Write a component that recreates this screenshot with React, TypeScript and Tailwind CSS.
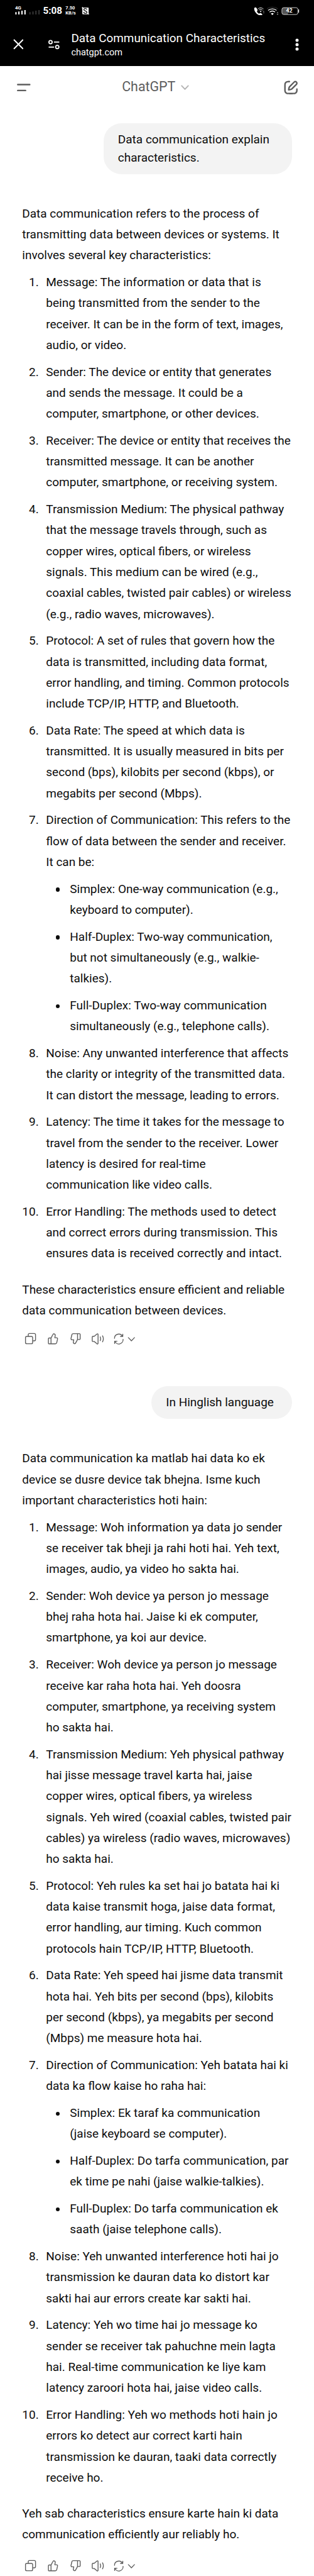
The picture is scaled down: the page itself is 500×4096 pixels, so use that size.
import React from "react";

type Item = { text: string[]; bullets?: string[][] };
type Answer = { intro: string[]; items: Item[]; outro: string[] };

const english: Answer = {
  intro: ["Data communication refers to the process of", "transmitting data between devices or systems. It", "involves several key characteristics:"],
  items: [
    { text: ["Message: The information or data that is", "being transmitted from the sender to the", "receiver. It can be in the form of text, images,", "audio, or video."] },
    { text: ["Sender: The device or entity that generates", "and sends the message. It could be a", "computer, smartphone, or other devices."] },
    { text: ["Receiver: The device or entity that receives the", "transmitted message. It can be another", "computer, smartphone, or receiving system."] },
    { text: ["Transmission Medium: The physical pathway", "that the message travels through, such as", "copper wires, optical fibers, or wireless", "signals. This medium can be wired (e.g.,", "coaxial cables, twisted pair cables) or wireless", "(e.g., radio waves, microwaves)."] },
    { text: ["Protocol: A set of rules that govern how the", "data is transmitted, including data format,", "error handling, and timing. Common protocols", "include TCP/IP, HTTP, and Bluetooth."] },
    { text: ["Data Rate: The speed at which data is", "transmitted. It is usually measured in bits per", "second (bps), kilobits per second (kbps), or", "megabits per second (Mbps)."] },
    {
      text: ["Direction of Communication: This refers to the", "flow of data between the sender and receiver.", "It can be:"],
      bullets: [
        ["Simplex: One-way communication (e.g.,", "keyboard to computer)."],
        ["Half-Duplex: Two-way communication,", "but not simultaneously (e.g., walkie-", "talkies)."],
        ["Full-Duplex: Two-way communication", "simultaneously (e.g., telephone calls)."],
      ],
    },
    { text: ["Noise: Any unwanted interference that affects", "the clarity or integrity of the transmitted data.", "It can distort the message, leading to errors."] },
    { text: ["Latency: The time it takes for the message to", "travel from the sender to the receiver. Lower", "latency is desired for real-time", "communication like video calls."] },
    { text: ["Error Handling: The methods used to detect", "and correct errors during transmission. This", "ensures data is received correctly and intact."] },
  ],
  outro: ["These characteristics ensure efficient and reliable", "data communication between devices."],
};

const hinglish: Answer = {
  intro: ["Data communication ka matlab hai data ko ek", "device se dusre device tak bhejna. Isme kuch", "important characteristics hoti hain:"],
  items: [
    { text: ["Message: Woh information ya data jo sender", "se receiver tak bheji ja rahi hoti hai. Yeh text,", "images, audio, ya video ho sakta hai."] },
    { text: ["Sender: Woh device ya person jo message", "bhej raha hota hai. Jaise ki ek computer,", "smartphone, ya koi aur device."] },
    { text: ["Receiver: Woh device ya person jo message", "receive kar raha hota hai. Yeh doosra", "computer, smartphone, ya receiving system", "ho sakta hai."] },
    { text: ["Transmission Medium: Yeh physical pathway", "hai jisse message travel karta hai, jaise", "copper wires, optical fibers, ya wireless", "signals. Yeh wired (coaxial cables, twisted pair", "cables) ya wireless (radio waves, microwaves)", "ho sakta hai."] },
    { text: ["Protocol: Yeh rules ka set hai jo batata hai ki", "data kaise transmit hoga, jaise data format,", "error handling, aur timing. Kuch common", "protocols hain TCP/IP, HTTP, Bluetooth."] },
    { text: ["Data Rate: Yeh speed hai jisme data transmit", "hota hai. Yeh bits per second (bps), kilobits", "per second (kbps), ya megabits per second", "(Mbps) me measure hota hai."] },
    {
      text: ["Direction of Communication: Yeh batata hai ki", "data ka flow kaise ho raha hai:"],
      bullets: [
        ["Simplex: Ek taraf ka communication", "(jaise keyboard se computer)."],
        ["Half-Duplex: Do tarfa communication, par", "ek time pe nahi (jaise walkie-talkies)."],
        ["Full-Duplex: Do tarfa communication ek", "saath (jaise telephone calls)."],
      ],
    },
    { text: ["Noise: Yeh unwanted interference hoti hai jo", "transmission ke dauran data ko distort kar", "sakti hai aur errors create kar sakti hai."] },
    { text: ["Latency: Yeh wo time hai jo message ko", "sender se receiver tak pahuchne mein lagta", "hai. Real-time communication ke liye kam", "latency zaroori hota hai, jaise video calls."] },
    { text: ["Error Handling: Yeh wo methods hoti hain jo", "errors ko detect aur correct karti hain", "transmission ke dauran, taaki data correctly", "receive ho."] },
  ],
  outro: ["Yeh sab characteristics ensure karte hain ki data", "communication efficiently aur reliably ho."],
};

function Lines({ lines }: { lines: string[] }) {
  return (
    <>
      {lines.map((line) => (
        <span key={line} className="block whitespace-nowrap">{line}</span>
      ))}
    </>
  );
}

function StatusBar() {
  return (
    <div className="flex h-[48px] items-start justify-between pl-[24px] pr-[23.3px]">
      <div className="flex items-start">
        <div className="mt-[9px] flex w-[39.5px] flex-col">
          <span className="h-[6.5px] text-[7.8px] font-bold leading-[7px]">4G</span>
          <svg width="39.5" height="7.5" viewBox="0 0 39.5 7.5">
            <path d="M1.4 3.2v4.1M6.1 2.2v5.1M11 1v6.3M15.8 0v7.3" stroke="#fff" strokeWidth="2.1" />
            <path d="M23.7 3.2v4.1M28.5 2.2v5.1M33.2 1v6.3M38.1 0v7.3" stroke="#333" strokeWidth="2.1" />
          </svg>
        </div>
        <span className="ml-[5px] mt-[9.4px] text-[15.3px] font-bold leading-[17px]">5:08</span>
        <span className="ml-[5.2px] mt-[9.2px] text-[7.5px] font-bold leading-[7.6px]">7.50<br />KB/s</span>
        <span className="ml-[9.3px] mt-[10.7px] flex">
          <svg width="12.6" height="12.6" viewBox="0 0 54 54">
            <path d="M7 0v48h47M0 7h46v47" fill="none" stroke="#fff" strokeWidth="4" />
            <rect x="7" y="7" width="39" height="41" fill="#fff" />
            <path d="M36 19c-1-6-6-8-11-8-6 0-10 3-10 8 0 11 21 6 21 17 0 5-4 8-10 8s-11-3-12-9" fill="none" stroke="#000" strokeWidth="5" />
          </svg>
        </span>
      </div>
      <div className="flex items-start">
        <svg className="mt-[9.5px]" width="72.3" height="14" viewBox="34 7.5 312.3 60.5" fill="none">
          <path d="M38 19c-3 12 4 27 16 39 11 10 25 15 37 12 3-4 2-8-2-12l-9-4c-4-1-7 4-10 4-6-3-12-9-14-16 2-3 5-5 4-9l-6-13c-5-6-11-6-16-1z" fill="#fff" />
          <path d="M62 26c11-10 28-10 39 0M69 34c7-6 18-6 25 0" stroke="#fff" strokeWidth="4" />
          <circle cx="82" cy="43" r="4.5" fill="#fff" />
          <path d="M99 42l4-3v18" stroke="#aaa" strokeWidth="3" />
          <path d="M126 24c20-15 52-15 73 0" stroke="#333" strokeWidth="5" />
          <path d="M133 36c17-14 42-14 58 0M143 47c12-9 26-9 38 0" stroke="#fff" strokeWidth="5.5" />
          <path d="M162 68l-10-10c6-6 14-6 20 0z" fill="#fff" />
          <path d="M192 53l6-7 6 7zM192 60l6 7 6-7z" fill="#ccc" />
          <path d="M270 17h-28a13 13 0 0 0-13 13v21a13 13 0 0 0 13 13h28z" fill="#555" />
          <rect x="228" y="17" width="110" height="47" rx="13" stroke="#ddd" strokeWidth="4" />
          <path d="M343 29v22" stroke="#ddd" strokeWidth="6" />
          <text x="256" y="52" fill="#fff" fontSize="39" fontWeight="700">42</text>
        </svg>
      </div>
    </div>
  );
}

function BrowserBar() {
  return (
    <div className="flex h-[56.6px] items-start pl-[20.5px] pr-[23.6px]">
      <svg className="mt-[14.2px]" width="16.8" height="16.8" viewBox="0 0 16.8 16.8">
        <path d="M1 1l14.8 14.8M15.8 1L1 15.8" stroke="#fff" strokeWidth="2" />
      </svg>
      <svg className="ml-[39.5px] mt-[14.5px]" width="18.2" height="16" viewBox="76.8 62.5 18.2 16" fill="none" stroke="#fff" strokeWidth="1.8">
        <circle cx="80.3" cy="66.4" r="2.6" />
        <path d="M85.6 66.4h8.6M77.3 74.3h8.6" />
        <circle cx="91" cy="74.3" r="2.6" />
      </svg>
      <div className="ml-[18.4px] grow whitespace-nowrap">
        <div className="mt-[1px] text-[18.9px] leading-[24px]">Data Communication Characteristics</div>
        <div className="mt-[1px] text-[14.5px] leading-[20px]">chatgpt.com</div>
      </div>
      <svg className="mt-[12.5px]" width="6" height="20" viewBox="0 0 6 20" fill="#fff">
        <circle cx="3" cy="2.9" r="2.5" />
        <circle cx="3" cy="10" r="2.5" />
        <circle cx="3" cy="17.1" r="2.5" />
      </svg>
    </div>
  );
}

function ChatNav() {
  return (
    <nav className="flex h-[91.9px] items-start justify-between pl-[27px] pr-[22.6px] text-[#5d5d5d]">
      <svg className="mt-[28.4px]" width="22" height="12.4" viewBox="0 0 22 12.4" stroke="currentColor" strokeWidth="2.5" strokeLinecap="round">
        <path d="M1.3 1.4h19M1.3 11h12.3" />
      </svg>
      <div className="mt-[20.6px] flex items-center gap-[9px] pr-[2.4px]">
        <span className="text-[21.4px] leading-[25px]">ChatGPT</span>
        <svg className="mt-[3px]" width="13" height="9" viewBox="0 0 13 9" fill="none" stroke="#b4b4b4" strokeWidth="1.9" strokeLinecap="round" strokeLinejoin="round">
          <path d="M1.3 1.4l5.2 5.5 5.2-5.5" />
        </svg>
      </div>
      <svg className="mt-[20.3px]" width="28.5" height="28.5" viewBox="0 0 24 24" fill="currentColor">
        <path d="M15.6729 3.91287C16.8918 2.69392 18.8682 2.69392 20.0871 3.91287C21.3061 5.13182 21.3061 7.10813 20.0871 8.32708L14.1499 14.2643C13.3849 15.0293 12.3925 15.5255 11.3215 15.6785L9.14142 15.9899C8.82983 16.0344 8.51546 15.9297 8.29289 15.7071C8.07033 15.4845 7.96554 15.1701 8.01005 14.8586L8.32149 12.6785C8.47449 11.6075 8.97072 10.615 9.7357 9.85006L15.6729 3.91287ZM18.6729 5.32708C18.235 4.88918 17.525 4.88918 17.0871 5.32708L11.1499 11.2643C10.6909 11.7233 10.3932 12.3187 10.3014 12.9613L10.1785 13.8215L11.0386 13.6986C11.6812 13.6068 12.2767 13.3091 12.7357 12.8501L18.6729 6.91287C19.1108 6.47497 19.1108 5.76499 18.6729 5.32708ZM11 3.99929C11.0004 4.55157 10.5531 4.99963 10.0008 5.00007C9.00227 5.00084 8.29769 5.00827 7.74651 5.06064C7.20685 5.11191 6.88488 5.20117 6.63803 5.32695C6.07354 5.61457 5.6146 6.07351 5.32698 6.63799C5.19279 6.90135 5.10062 7.24904 5.05118 7.8542C5.00078 8.47105 5 9.26336 5 10.4V13.6C5 14.7366 5.00078 15.5289 5.05118 16.1457C5.10062 16.7509 5.19279 17.0986 5.32698 17.3619C5.6146 17.9264 6.07354 18.3854 6.63803 18.673C6.90138 18.8072 7.24907 18.8993 7.85424 18.9488C8.47108 18.9992 9.26339 19 10.4 19H13.6C14.7366 19 15.5289 18.9992 16.1458 18.9488C16.7509 18.8993 17.0986 18.8072 17.362 18.673C17.9265 18.3854 18.3854 17.9264 18.673 17.3619C18.7988 17.1151 18.8881 16.7931 18.9393 16.2535C18.9917 15.7023 18.9991 14.9977 18.9999 13.9992C19.0003 13.4469 19.4484 12.9995 20.0007 13C20.553 13.0004 21.0003 13.4485 20.9999 14.0007C20.9991 14.9789 20.9932 15.7808 20.9304 16.4426C20.8664 17.116 20.7385 17.7136 20.455 18.2699C19.9757 19.2107 19.2108 19.9756 18.27 20.455C17.6777 20.7568 17.0375 20.8826 16.3086 20.9421C15.6008 21 14.7266 21 13.6428 21H10.3572C9.27339 21 8.39925 21 7.69138 20.9421C6.96253 20.8826 6.32234 20.7568 5.73005 20.455C4.78924 19.9756 4.02433 19.2107 3.54497 18.2699C3.24318 17.6776 3.11737 17.0374 3.05782 16.3086C2.99998 15.6007 2.99999 14.7266 3 13.6428V10.3572C2.99999 9.27337 2.99998 8.39922 3.05782 7.69134C3.11737 6.96249 3.24318 6.3223 3.54497 5.73001C4.02433 4.7892 4.78924 4.0243 5.73005 3.54493C6.28633 3.26149 6.88399 3.13358 7.55735 3.06961C8.21919 3.00673 9.02103 3.00083 9.99922 3.00007C10.5515 2.99964 10.9996 3.447 11 3.99929Z" />
      </svg>
    </nav>
  );
}

const thumb = "M183 82c0-3 2-5 5-5h13l13-24c3-6 5-6 8-5 6 2 9 6 8 12l-3 15h12c5 0 8 4 7 9l-6 26c-1 4-4 7-9 7h-43c-3 0-5-2-5-5zM201 77v40";

function Actions() {
  return (
    <div className="flex h-[20px] items-center pl-[39.3px] [&_svg]:h-[19.45px] [&_svg]:fill-none [&_svg]:stroke-[#5d5d5d] [&_svg]:stroke-[6px]">
      <svg width="19.45" viewBox="20 40 84 84">
        <rect x="27" y="66" width="49" height="50" rx="8" />
        <path d="M46 66V54a8 8 0 0 1 8-8h34a8 8 0 0 1 8 8v34a8 8 0 0 1-8 8H77" />
      </svg>
      <svg className="ml-[16.2px]" width="18.5" viewBox="174 40 80 84" strokeLinejoin="round"><path d={thumb} /></svg>
      <svg className="ml-[17.6px]" width="18.5" viewBox="330 40 80 84" strokeLinejoin="round"><path d={thumb} transform="rotate(180 292.5 82)" /></svg>
      <svg className="ml-[15.3px]" width="21.8" viewBox="476 40 94 84" strokeLinecap="round" strokeLinejoin="round">
        <path d="M484 70c0-3 3-5 6-5h8l18-15c4-3 8-2 8 3v60c0 5-4 6-8 3l-18-15h-8c-3 0-6-2-6-5zM539 69q6 13 0 26M555 62q11 20 0 41" />
      </svg>
      <svg className="ml-[13.4px]" width="17.6" viewBox="628 40 76 84" strokeLinecap="round" strokeLinejoin="round">
        <path d="M638 79a29 29 0 0 1 55-13M695 51v15h-16M697 86a29 29 0 0 1-56 13M639 115v-16h16" />
      </svg>
      <svg className="ml-[5.6px]" width="12.5" viewBox="728 40 54 84" strokeLinecap="round" strokeLinejoin="round"><path d="M734 74l21 22 21-22" /></svg>
    </div>
  );
}

function AnswerBlock({ answer }: { answer: Answer }) {
  return (
    <div className="pl-[35.3px] text-[19px] leading-[33.27px]">
      <p><Lines lines={answer.intro} /></p>
      <ol className="mt-[9.5px] flex flex-col gap-[9.5px]">
        {answer.items.map((item, i) => (
          <li key={item.text[0]} className="flex">
            <span className="flex w-[26.4px] shrink-0 justify-end">{i + 1}.</span>
            <div className="ml-[11.6px]">
              <Lines lines={item.text} />
              {item.bullets && (
                <ul className="mt-[9.5px] flex flex-col gap-[9.5px]">
                  {item.bullets.map((b) => (
                    <li key={b[0]} className="flex">
                      <span className="ml-[15.3px] mt-[14.6px] size-[6.4px] shrink-0 rounded-full bg-[#0d0d0d]" />
                      <div className="ml-[16.3px]"><Lines lines={b} /></div>
                    </li>
                  ))}
                </ul>
              )}
            </div>
          </li>
        ))}
      </ol>
      <p className="mt-[23.8px]"><Lines lines={answer.outro} /></p>
    </div>
  );
}

function Prompt({ lines, width }: { lines: string[]; width: string }) {
  return (
    <div className="flex justify-end pr-[34.7px]">
      <div className={`${width} rounded-[28.5px] bg-[#f3f3f3] py-[11.8px] pl-[23.3px] text-[19px] leading-[28.5px]`}>
        <Lines lines={lines} />
      </div>
    </div>
  );
}

export default function App() {
  return (
    <div className="h-[4096px] w-[500px] overflow-hidden bg-white font-['Roboto',sans-serif] text-[#0d0d0d]">
      <header className="h-[104.6px] bg-black text-white">
        <StatusBar />
        <BrowserBar />
      </header>
      <ChatNav />
      <Prompt width="w-[300.8px]" lines={["Data communication explain", "characteristics."]} />
      <div className="pt-[45.7px]"><AnswerBlock answer={english} /></div>
      <div className="pt-[18.2px]"><Actions /></div>
      <div className="pt-[66px]">
        <Prompt width="w-[224.3px]" lines={["In Hinglish language"]} />
      </div>
      <div className="pt-[46px]"><AnswerBlock answer={hinglish} /></div>
      <div className="pt-[23.7px]"><Actions /></div>
    </div>
  );
}
